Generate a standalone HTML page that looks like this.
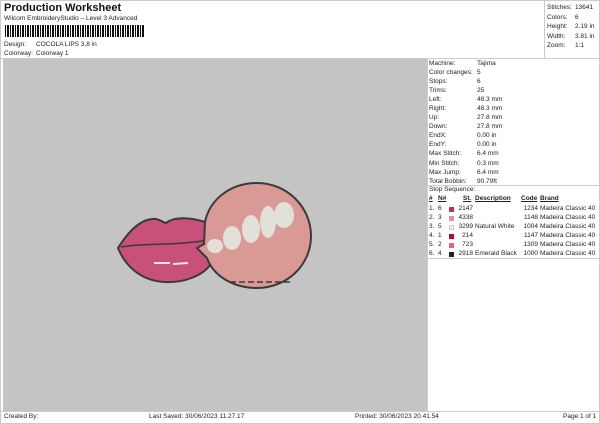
<!DOCTYPE html>
<html><head><style>
*{margin:0;padding:0;box-sizing:border-box}
body{width:600px;height:424px;background:#fff;font-family:"Liberation Sans",sans-serif;font-size:6.5px;color:#222;position:relative;overflow:hidden}
.a{position:absolute;white-space:nowrap}
.r{position:absolute;left:429px;white-space:nowrap}
.sq{display:inline-block;width:5px;height:5px;vertical-align:-0.5px}
</style></head><body>
<div class="a" style="left:0;top:0;width:600px;height:424px;border:1px solid #ccc"></div>
<div class="a" style="left:4px;top:2px;font-size:11px;font-weight:bold;color:#111">Production Worksheet</div>
<div class="a" style="left:4px;top:15px;font-size:6.5px">Wilcom EmbroideryStudio – Level 3 Advanced</div>
<div class="a" style="left:5px;top:25px;width:139px;height:12px;background:repeating-linear-gradient(90deg,#111 0 1px,#fff 1px 2px,#111 2px 3px,#111 3px 4px,#fff 4px 5px)"></div>
<div class="a" style="left:4px;top:41px">Design:</div><div class="a" style="left:36px;top:41px">COCOLA LIPS 3,8 in</div>
<div class="a" style="left:4px;top:50px">Colorway:</div><div class="a" style="left:36px;top:50px">Colorway 1</div>
<div class="a" style="left:544px;top:0;width:1px;height:59px;background:#ccc"></div>
<div class="a" style="left:0;top:58px;width:600px;height:1px;background:#ccc"></div>
<div class="a" style="left:547px;top:3px;line-height:9.5px">Stitches:<br>Colors:<br>Height:<br>Width:<br>Zoom:</div>
<div class="a" style="left:575px;top:3px;line-height:9.5px">13641<br>6<br>2.19 in<br>3.81 in<br>1:1</div>
<div class="a" style="left:3px;top:59px;width:424px;height:352px;background:#c4c4c4"></div>
<svg class="a" style="left:3px;top:59px" width="424" height="352" viewBox="3 59 424 352">
<path d="M118 248 C128 232,140 220,152 219 C158 218,162 222,166 223 C172 218,185 216,205 222 L212 262 C205 275,185 283,165 282 C140 281,125 265,118 248 Z" fill="#c8507a" stroke="#3a3a3a" stroke-width="2"/>
<path d="M121 247 C140 243,175 246,208 240" stroke="#3a3a3a" stroke-width="1.5" fill="none"/>
<path d="M154 263 L170 263 M173 264 L188 263" stroke="#f2e6e6" stroke-width="2"/>
<path d="M205 222 C210 198,232 183,257 183 C287 183,311 207,311 236 C311 265,287 288,257 288 C232 288,213 275,207 258 L197 248 L204 244 Z" fill="#d99a95" stroke="#3a3a3a" stroke-width="2"/>
<g fill="#e2e0d8">
<ellipse cx="215" cy="246" rx="8" ry="7"/>
<ellipse cx="232" cy="238" rx="9" ry="12"/>
<ellipse cx="251" cy="229" rx="9" ry="14"/>
<ellipse cx="268" cy="222" rx="8" ry="16"/>
<ellipse cx="284" cy="215" rx="10" ry="13"/>
</g>
<path d="M230 282 L290 282" stroke="#3a3a3a" stroke-width="1.5" stroke-dasharray="6 3"/>
</svg>
<div class="a" style="left:427px;top:59px;width:1px;height:353px;background:#ccc"></div>
<div class="a" style="left:0;top:411px;width:600px;height:1px;background:#ccc"></div>
<div class="r" style="top:59px;line-height:9.05px">Machine:<br>Color changes:<br>Stops:<br>Trims:<br>Left:<br>Right:<br>Up:<br>Down:<br>EndX:<br>EndY:<br>Max Stitch:<br>Min Stitch:<br>Max Jump:<br>Total Bobbin:</div>
<div class="a" style="left:477px;top:59px;line-height:9.05px">Tajima<br>5<br>6<br>25<br>48.3 mm<br>48.3 mm<br>27.8 mm<br>27.8 mm<br>0.00 in<br>0.00 in<br>6.4 mm<br>0.3 mm<br>6.4 mm<br>90.79ft</div>
<div class="a" style="left:427px;top:185px;width:173px;height:1px;background:#ccc"></div>
<div class="r" style="top:186px">Stop Sequence:</div>
<div class="a" style="left:429px;top:195px;font-weight:bold;text-decoration:underline">#</div>
<div class="a" style="left:438px;top:195px;font-weight:bold;text-decoration:underline">N#</div>
<div class="a" style="left:463px;top:195px;font-weight:bold;text-decoration:underline">St.</div>
<div class="a" style="left:475px;top:195px;font-weight:bold;text-decoration:underline">Description</div>
<div class="a" style="left:521px;top:195px;font-weight:bold;text-decoration:underline">Code</div>
<div class="a" style="left:540px;top:195px;font-weight:bold;text-decoration:underline">Brand</div>
<div class="a" style="left:429px;top:204px;line-height:9.1px">1.&nbsp; 6<br>2.&nbsp; 3<br>3.&nbsp; 5<br>4.&nbsp; 1<br>5.&nbsp; 2<br>6.&nbsp; 4</div>
<div class="a" style="left:449px;top:205px;line-height:9.1px"><span class="sq" style="background:#c0305a"></span><br><span class="sq" style="background:#e29097"></span><br><span class="sq" style="background:#f0f0f0;border:1px solid #ccc"></span><br><span class="sq" style="background:#b01030"></span><br><span class="sq" style="background:#e06090"></span><br><span class="sq" style="background:#222"></span></div>
<div class="a" style="left:455px;top:204px;line-height:9.1px;width:18px;text-align:right">2147<br>4338<br>3299<br>214<br>723<br>2918</div>
<div class="a" style="left:475px;top:204px;line-height:9.1px"><br><br>Natural White<br><br><br>Emerald Black</div>
<div class="a" style="left:520px;top:204px;line-height:9.1px;width:18px;text-align:right">1234<br>1148<br>1004<br>1147<br>1309<br>1000</div>
<div class="a" style="left:540px;top:204px;line-height:9.1px">Madeira Classic 40<br>Madeira Classic 40<br>Madeira Classic 40<br>Madeira Classic 40<br>Madeira Classic 40<br>Madeira Classic 40</div>
<div class="a" style="left:427px;top:258px;width:173px;height:1px;background:#ccc"></div>
<div class="a" style="left:4px;top:413px">Created By:</div>
<div class="a" style="left:149px;top:413px">Last Saved: 30/06/2023 11.27.17</div>
<div class="a" style="left:355px;top:413px">Printed: 30/06/2023 20.41.54</div>
<div class="a" style="left:563px;top:413px">Page 1 of 1</div>
</body></html>
